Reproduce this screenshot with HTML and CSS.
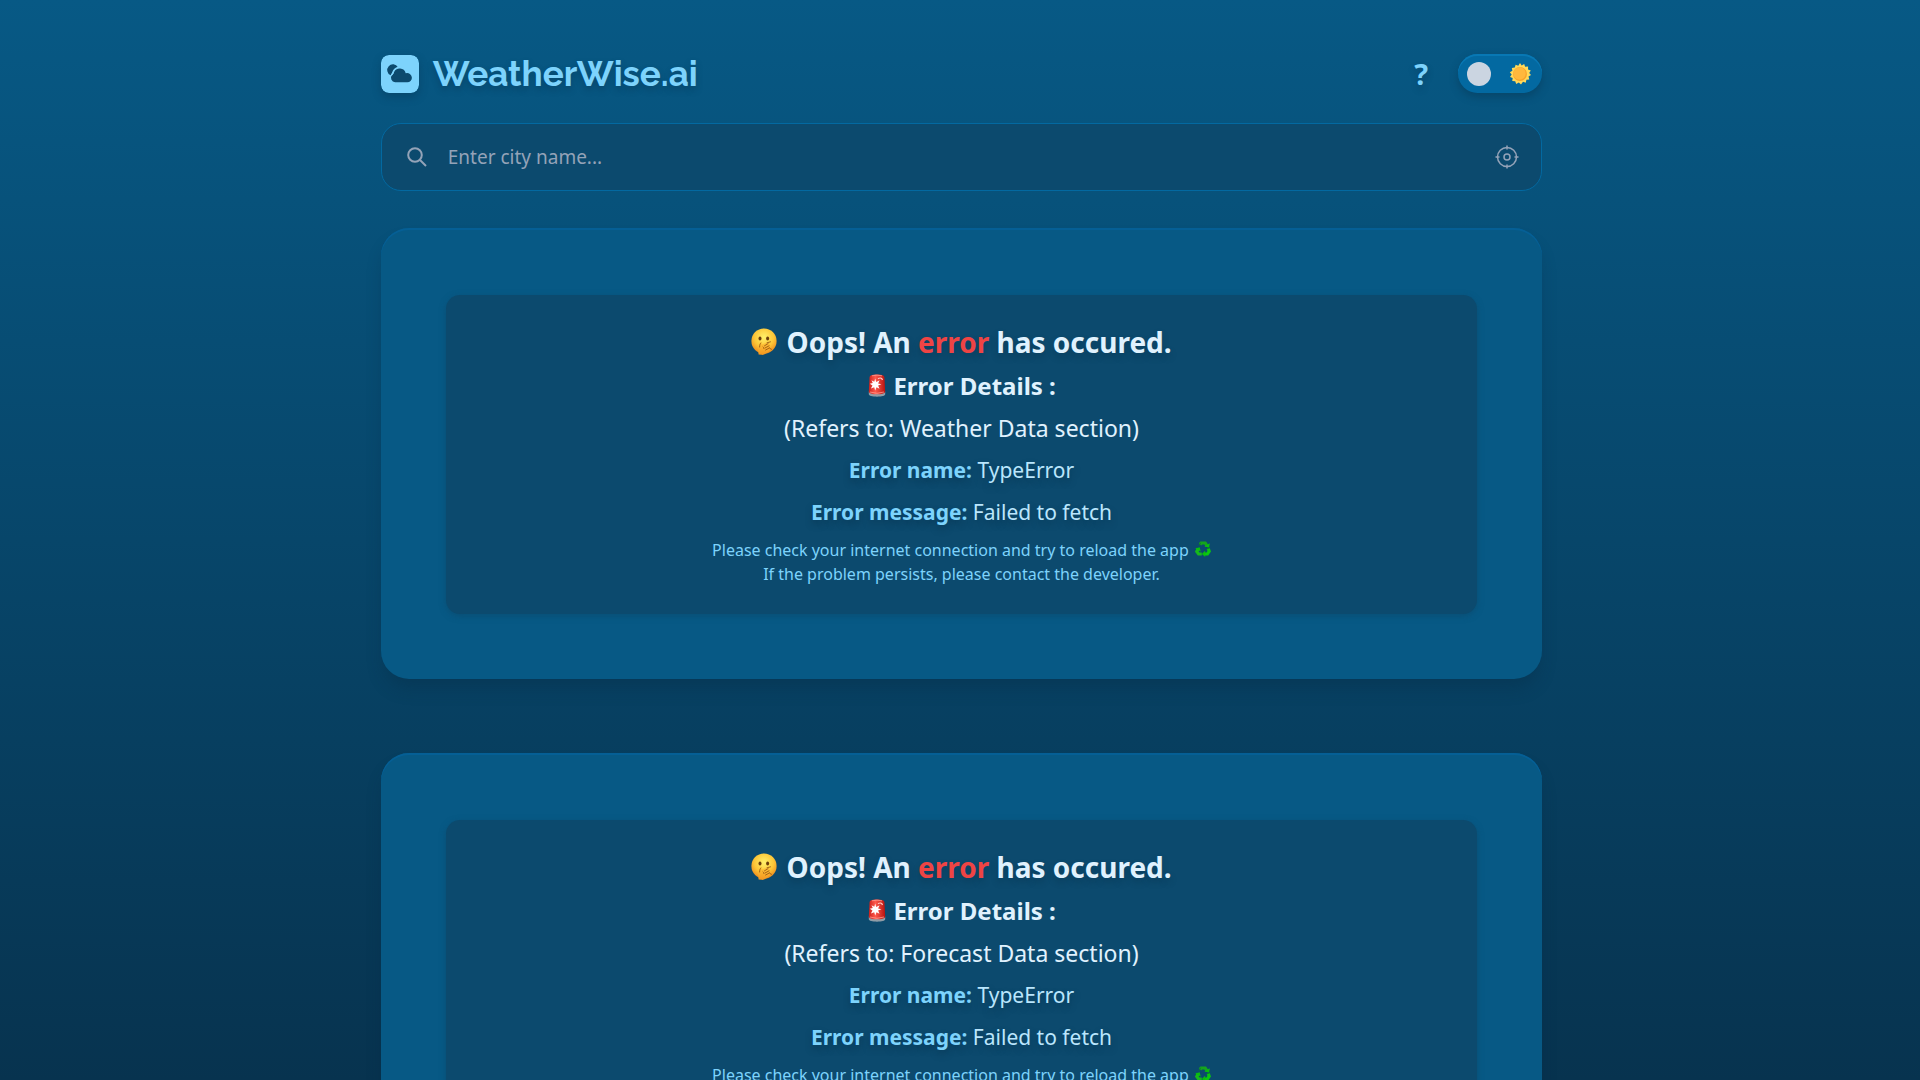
FILE: index.html
```html
<!DOCTYPE html>
<html lang="en">
<head>
<meta charset="utf-8">
<meta name="viewport" content="width=device-width, initial-scale=1">
<title>WeatherWise.ai</title>
<link rel="stylesheet" href="styles.css">
</head>
<body>
<svg class="sprite" aria-hidden="true">
  <defs>
    <radialGradient id="face-fill" cx="50%" cy="35%" r="65%"><stop offset="0" stop-color="#fff06a"/><stop offset=".6" stop-color="#fdc637"/><stop offset="1" stop-color="#ee8a1c"/></radialGradient>
    <linearGradient id="hand-fill" x1="0" y1="0" x2="0" y2="1"><stop offset="0" stop-color="#ffc53a"/><stop offset="1" stop-color="#f3961f"/></linearGradient>
    <linearGradient id="siren-fill" x1="0" x2="1"><stop offset="0" stop-color="#c9201c"/><stop offset=".4" stop-color="#ff5a4c"/><stop offset="1" stop-color="#b5120f"/></linearGradient>
  </defs>
  <symbol id="face" viewBox="0 0 26 27">
    <circle cx="13" cy="13" r="12.6" fill="url(#face-fill)"/>
    <ellipse cx="9" cy="10.5" rx="1.5" ry="2.1" fill="#6b3d0c"/>
    <ellipse cx="16.6" cy="10.5" rx="1.5" ry="2.1" fill="#6b3d0c"/>
    <path d="M7.6 26.4C7 22 7.4 17 9 14.8c1.2-1 2 .2 1.7 1.8l5.6-2.2c1.3-.2 1.6 1 .6 1.6 1.600-.4 2.600.8 1.200 1.800 1.500 0 2 1.400.7 2.100 1 .6.7 1.800-.3 2.200-2.500 3.200-5.500 5.200-8 4.700z" fill="url(#hand-fill)"/>
    <path d="M13.500 17.800l3.600-2.200M14 20l4-2.200M14.600 22l4-2.200M8.600 19c0-2 .4-3 1.200-4M12 18.800c.6.500.8 1 .8 1.700M16 14.800l3.500-1M19 20.500l1.500.8" fill="none" stroke="#9c5b15" stroke-width=".9" stroke-linecap="round"/>
  </symbol>
  <symbol id="siren" viewBox="0 0 18 23">
    <path d="M.8 17.500h16.400v2.800c0 1.500-3.500 2.400-8.200 2.400s-8.200-.9-8.200-2.400z" fill="#8f9ca6"/>
    <path d="M1.500 4C1.600 1.500 3.500.6 9 .6s7.400.9 7.500 3.400l.7 14c-.6 1.500-3.700 2.300-8.200 2.300S1.400 19.500.8 18z" fill="url(#siren-fill)"/>
    <path d="M4 1.800Q9 .5 14 1.800M2 18q7 2.600 14 0" fill="none" stroke="#ff9a8f" stroke-width=".8"/>
    <path d="M7.200 4.500l1 3.400 3.400-1.700-1.500 3.200 3.300.9-3.300 1.200 1.400 3.300-3-1.500-1.300 3.300-1-3.400-3.300 1.300 1.600-3L1.800 9.800l3-.7-1.300-2.800 2.800 1.400z" fill="#fff"/>
    <path d="M10 4.800c2-1.500 4-.8 4.500 1.200" fill="none" stroke="#ffc5be" stroke-width="1.200"/>
  </symbol>
  <symbol id="recycle" viewBox="0 0 16 16">
    <g fill="none" stroke-width="3.200">
      <path d="M5 3.400L6.200 2h4l1.800 2.800" stroke="#15a51c"/>
      <path d="M13.200 7.500l1 2.700-1.800 2.800H9.500" stroke="#0bc80f"/>
      <path d="M6.800 13H3.600l-1.800-2.500 1.500-3" stroke="#17b81b"/>
    </g>
    <path d="M9.300 5.600l4.800.8.700-4.200zM10.200 9.600v6.300L6.900 13zM.2 7.600l4.500-1.400 1 4.300z" fill="#08bf0c"/>
    <path d="M4 4.500l1.700-2.800M12 7.900l2.800-1.200" stroke="#0c7d2b" stroke-width="1"/>
  </symbol>
</svg>

<div class="page">
  <header class="topbar">
    <h1 class="brand">
      <svg class="brand-mark" viewBox="0 0 38 38" aria-hidden="true">
        <rect width="38" height="38" rx="8" fill="#7dd3fc"/>
        <path d="M9.600 20.200A5.700 5.700 0 1 1 16.900 12.200C13.200 13.300 11.700 16.800 9.600 20.200z" fill="#0c4a6e"/>
        <path d="M14.500 27.200a4.300 4.300 0 0 1-3.200-7.400c1-1 1.400-1 1.700-2.500a6.200 6.200 0 0 1 11.700.9 4.800 4.800 0 0 1 6.200 4.500 4.500 4.500 0 0 1-4.600 4.500z" fill="#0c4a6e"/>
        <path d="M10.300 20.300c1-.8 1.300-1.200 1.600-2.600a7 7 0 0 1 5.500-5.300" fill="none" stroke="#7dd3fc" stroke-width="1.300"/>
      </svg>
      <span>WeatherWise.ai</span>
    </h1>
    <div class="actions">
      <button class="help" type="button" aria-label="Help">?</button>
      <button class="theme" type="button" aria-label="Toggle theme">
        <span class="knob"></span>
        <svg class="sun" viewBox="0 0 22 22" aria-hidden="true">
          <path d="M11 0l1.700 2.400L15.200.9l.9 2.800 3-.2-.1 3 2.800 1-1.600 2.400L22 12l-2.500 1.500.8 2.900-2.900.4-.6 2.900-2.800-.9L12 21.500l-2.200-1.900-2.600 1.300-1-2.700-3-.1.500-3-2.700-1.200 1.700-2.400L.8 9.200l2.600-1.400-.6-2.900 3-.3.8-2.800 2.700 1z" fill="#ffd95a"/>
          <circle cx="11" cy="11" r="7" fill="#f9a32a"/>
          <circle cx="10.500" cy="10.500" r="6.200" fill="#ffb83d"/>
        </svg>
      </button>
    </div>
  </header>

  <form class="search">
    <svg class="search-icon" viewBox="0 0 20 20" aria-hidden="true"><circle cx="8" cy="8" r="6.800"/><path d="M13 13l6 6"/></svg>
    <input type="text" placeholder="Enter city name..." aria-label="City name">
    <button class="locate" type="button" aria-label="Use my location">
      <svg viewBox="0 0 24 24" aria-hidden="true"><circle cx="12" cy="12" r="9.500"/><circle cx="12" cy="12" r="3"/><path d="M12 .5v4M12 19.500v4M.5 12h4M19.500 12h4"/></svg>
    </button>
  </form>

  <main class="sections">
    <section class="card">
      <div class="error">
        <h2><svg class="face" aria-hidden="true"><use href="#face"/></svg> Oops! An <span class="alert">error</span> has occured.</h2>
        <h3><svg class="siren" aria-hidden="true"><use href="#siren"/></svg> Error Details :</h3>
        <p class="scope">(Refers to: Weather Data section)</p>
        <p class="detail"><strong>Error name:</strong> TypeError</p>
        <p class="detail"><strong>Error message:</strong> Failed to fetch</p>
        <p class="hint">Please check your internet connection and try to reload the app <svg class="recycle" aria-hidden="true"><use href="#recycle"/></svg><br>If the problem persists, please contact the developer.</p>
      </div>
    </section>
    <section class="card">
      <div class="error">
        <h2><svg class="face" aria-hidden="true"><use href="#face"/></svg> Oops! An <span class="alert">error</span> has occured.</h2>
        <h3><svg class="siren" aria-hidden="true"><use href="#siren"/></svg> Error Details :</h3>
        <p class="scope">(Refers to: Forecast Data section)</p>
        <p class="detail"><strong>Error name:</strong> TypeError</p>
        <p class="detail"><strong>Error message:</strong> Failed to fetch</p>
        <p class="hint">Please check your internet connection and try to reload the app <svg class="recycle" aria-hidden="true"><use href="#recycle"/></svg><br>If the problem persists, please contact the developer.</p>
      </div>
    </section>
  </main>
</div>
</body>
</html>
```
FILE: styles.css
```css
* { box-sizing: border-box; }
html { height: 100%; }
body {
  margin: 0;
  min-height: 100%;
  background: linear-gradient(#075985, #07334f) no-repeat;
  background-size: 100% 100vh;
  background-attachment: fixed;
  color: #e0f2fe;
  font-family: "Noto Sans", "Open Sans", sans-serif;
  scrollbar-width: none;
}
h1, h2, h3, p { margin: 0; }
button { padding: 0; border: 0; background: none; font: inherit; color: inherit; cursor: pointer; }
svg { display: block; }
.sprite { position: absolute; width: 0; height: 0; }

.page { width: 62%; min-width: 320px; margin: 0 auto; padding: 54px 13px 64px 16px; }

.topbar { display: flex; justify-content: space-between; align-items: center; height: 39px; }
.brand {
  display: flex;
  align-items: center;
  gap: 14px;
  color: #7dd3fc;
  font: 700 35px/38px Raleway, Lato, sans-serif;
  text-shadow: 0 4px 6px rgba(8, 47, 73, .35);
}
.brand-mark { width: 38px; height: 38px; border-radius: 8px; box-shadow: 0 4px 8px rgba(8, 47, 73, .35); }
.actions { display: flex; align-items: center; gap: 30px; }
.help { color: #7dd3fc; font-size: 29px; font-weight: 700; line-height: 38px; text-shadow: 0 4px 6px rgba(8, 47, 73, .35); }
.theme {
  display: flex;
  justify-content: space-between;
  align-items: center;
  width: 84px;
  height: 39px;
  padding: 0 11px 0 9px;
  border-radius: 20px;
  background: #0369a1;
  box-shadow: inset 0 2px 0 #0878b4, 0 4px 8px rgba(8, 47, 73, .4);
}
.knob { width: 24px; height: 24px; border-radius: 50%; background: #cbd5e1; }
.sun { width: 22px; height: 22px; }

.search {
  display: flex;
  align-items: center;
  height: 68px;
  margin-top: 30px;
  padding: 0 22px 0 25px;
  border: 1px solid #0369a1;
  border-radius: 20px;
  background: #0c4a6e;
}
.search-icon, .locate svg { fill: none; stroke: #94a3b8; stroke-width: 2; }
.search-icon { width: 20px; height: 20px; }
.search input {
  flex: 1;
  min-width: 0;
  padding: 0 21px;
  border: 0;
  outline: 0;
  background: none;
  color: #e0f2fe;
  font: 19px/28px "Noto Sans", "Open Sans", sans-serif;
}
.search input::placeholder { color: #94a3b8; opacity: 1; }
.locate svg { width: 24px; height: 24px; stroke-width: 1.5; }

.sections { display: grid; gap: 74px; margin-top: 37px; }
.card {
  padding: 67px 65px 65px;
  border-radius: 28px;
  background: #075985;
  box-shadow: inset 0 2px 0 #055f95, 0 12px 18px -4px rgba(5, 37, 60, .3);
}
.error {
  padding: 24px 24px 28px;
  border-radius: 14px;
  background: #0c4a6e;
  box-shadow: 0 2px 6px rgba(12, 74, 110, .7);
  text-align: center;
}
.error svg { display: inline-block; }
.error h2 { font-size: 28px; line-height: 46px; text-shadow: 0 4px 6px rgba(8, 47, 73, .4); }
.alert { color: #ef4444; }
.error h3 { font-size: 24px; line-height: 42px; }
.scope { font-size: 23px; line-height: 42px; }
.detail { color: #bae6fd; font-size: 21px; line-height: 42px; text-shadow: 0 4px 6px rgba(8, 47, 73, .5); }
.detail strong { color: #7dd3fc; }
.hint { padding-top: 5px; color: #7dd3fc; font-size: 16px; line-height: 24px; }
.face { width: 26px; height: 27px; margin-right: 2px; vertical-align: -2px; }
.siren { width: 20px; height: 23px; vertical-align: -2px; }
.recycle { width: 16px; height: 16px; margin-left: 2px; vertical-align: -1px; }
```
